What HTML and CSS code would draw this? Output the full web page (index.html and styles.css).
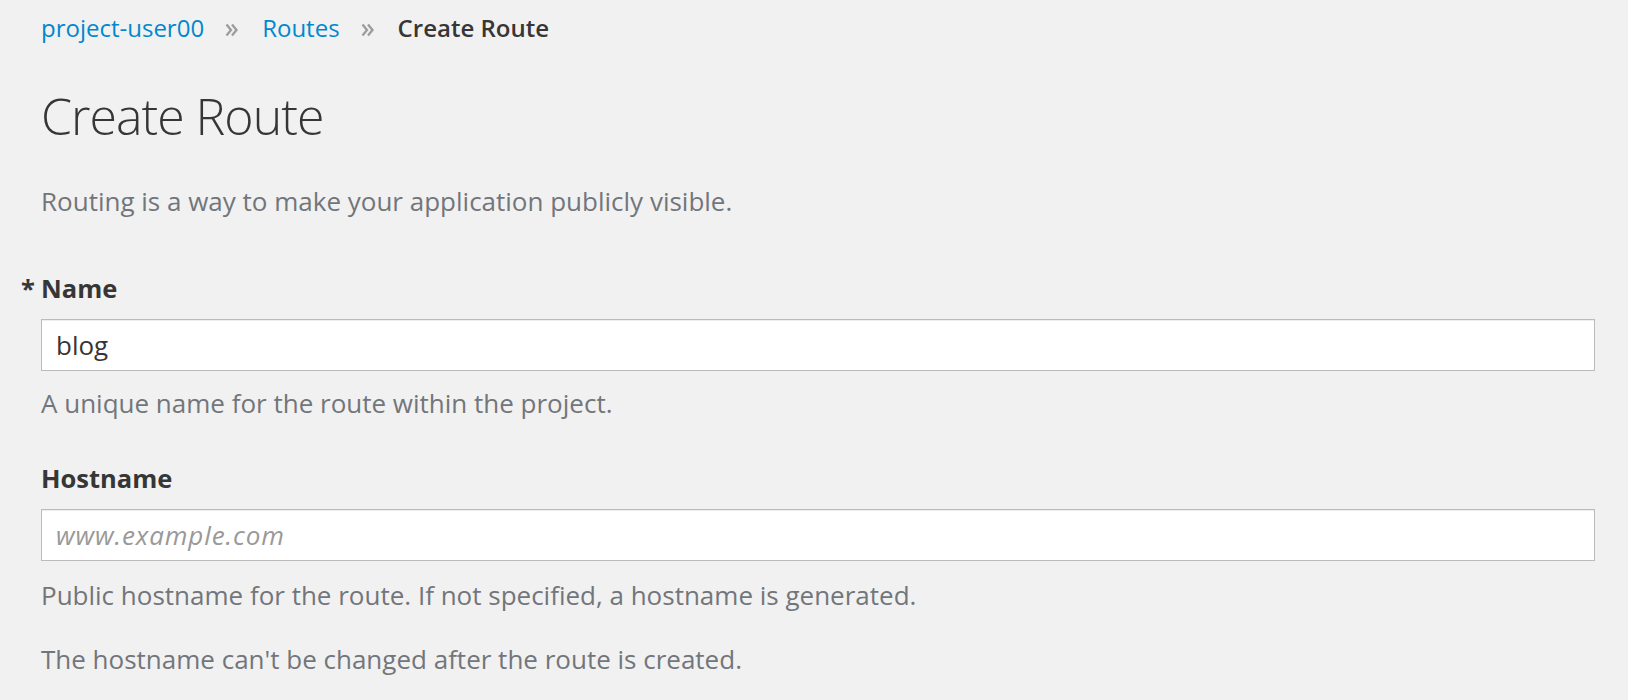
FILE: index.html
```html
<!DOCTYPE html>
<html>
<head>
<meta charset="utf-8">
<link rel="stylesheet" href="styles.css">
</head>
<body>
<div class="page">
  <nav class="breadcrumb">
    <a class="crumb-link" href="#">project-user00</a>
    <span class="sep"><svg class="sep-icon" width="13" height="14" viewBox="0 0 13 14"><path d="M1.5 1.5L6 7l-4.5 5.5M7 1.5L11.5 7 7 12.5" fill="none" stroke="#9c9c9c" stroke-width="2.3"/></svg></span>
    <a class="crumb-link" href="#">Routes</a>
    <span class="sep"><svg class="sep-icon" width="13" height="14" viewBox="0 0 13 14"><path d="M1.5 1.5L6 7l-4.5 5.5M7 1.5L11.5 7 7 12.5" fill="none" stroke="#9c9c9c" stroke-width="2.3"/></svg></span>
    <span class="crumb-current">Create Route</span>
  </nav>
  <h1 class="title">Create Route</h1>
  <p class="intro">Routing is a way to make your application publicly visible.</p>
  <div class="field">
    <label class="label required">Name</label>
    <input class="input" type="text" value="blog">
    <div class="help">A unique name for the route within the project.</div>
  </div>
  <div class="field field-host">
    <label class="label">Hostname</label>
    <input class="input" type="text" placeholder="www.example.com">
    <div class="help help-after">Public hostname for the route. If not specified, a hostname is generated.</div>
    <div class="help help-extra">The hostname can't be changed after the route is created.</div>
  </div>
</div>
</body>
</html>
```

FILE: styles.css
```css
html, body {
  margin: 0;
  padding: 0;
  background: #f1f1f1;
}
body {
  font-family: "Open Sans", "Noto Sans", sans-serif;
  color: #363636;
}
.page {
  padding: 7px 33px 0 41px;
}
.breadcrumb {
  display: flex;
  align-items: center;
  height: 40px;
  font-size: 24px;
}
.crumb-link {
  color: #0088ce;
  text-decoration: none;
}
.sep {
  display: flex;
  align-items: center;
  padding: 0 24px 0 21px;
  margin-top: 5px;
}
.sep-icon {
  display: block;
}
.crumb-current {
  font-weight: 600;
  color: #363636;
}
.title {
  margin: 36px 0 0;
  font-size: 50px;
  font-weight: 300;
  letter-spacing: -1px;
  line-height: 66px;
  color: #363636;
}
.intro {
  margin: 34px 0 0;
  font-size: 26px;
  line-height: 36px;
  color: #72767b;
}
.field {
  display: flex;
  flex-direction: column;
  margin-top: 51px;
}
.field-host {
  margin-top: 39px;
}
.label {
  font-size: 25.5px;
  font-weight: 700;
  line-height: 36px;
  color: #363636;
}
.required::before {
  content: "*";
  display: inline-block;
  width: 20px;
  margin-left: -20px;
}
.input {
  margin-top: 13px;
  height: 52px;
  box-sizing: border-box;
  border: 1px solid #bbbbbb;
  box-shadow: inset 0 1px 1px rgba(3, 3, 3, 0.075);
  background: #fff;
  padding: 0 14px;
  font-family: "Open Sans", "Noto Sans", sans-serif;
  font-size: 26px;
  color: #363636;
  outline: none;
}
.input::placeholder {
  color: #999;
  font-style: italic;
  letter-spacing: 0.9px;
}
.help {
  margin-top: 14px;
  font-size: 26px;
  line-height: 36px;
  color: #72767b;
}
.help-after {
  margin-top: 16px;
}
.help-extra {
  margin-top: 28px;
}
```
